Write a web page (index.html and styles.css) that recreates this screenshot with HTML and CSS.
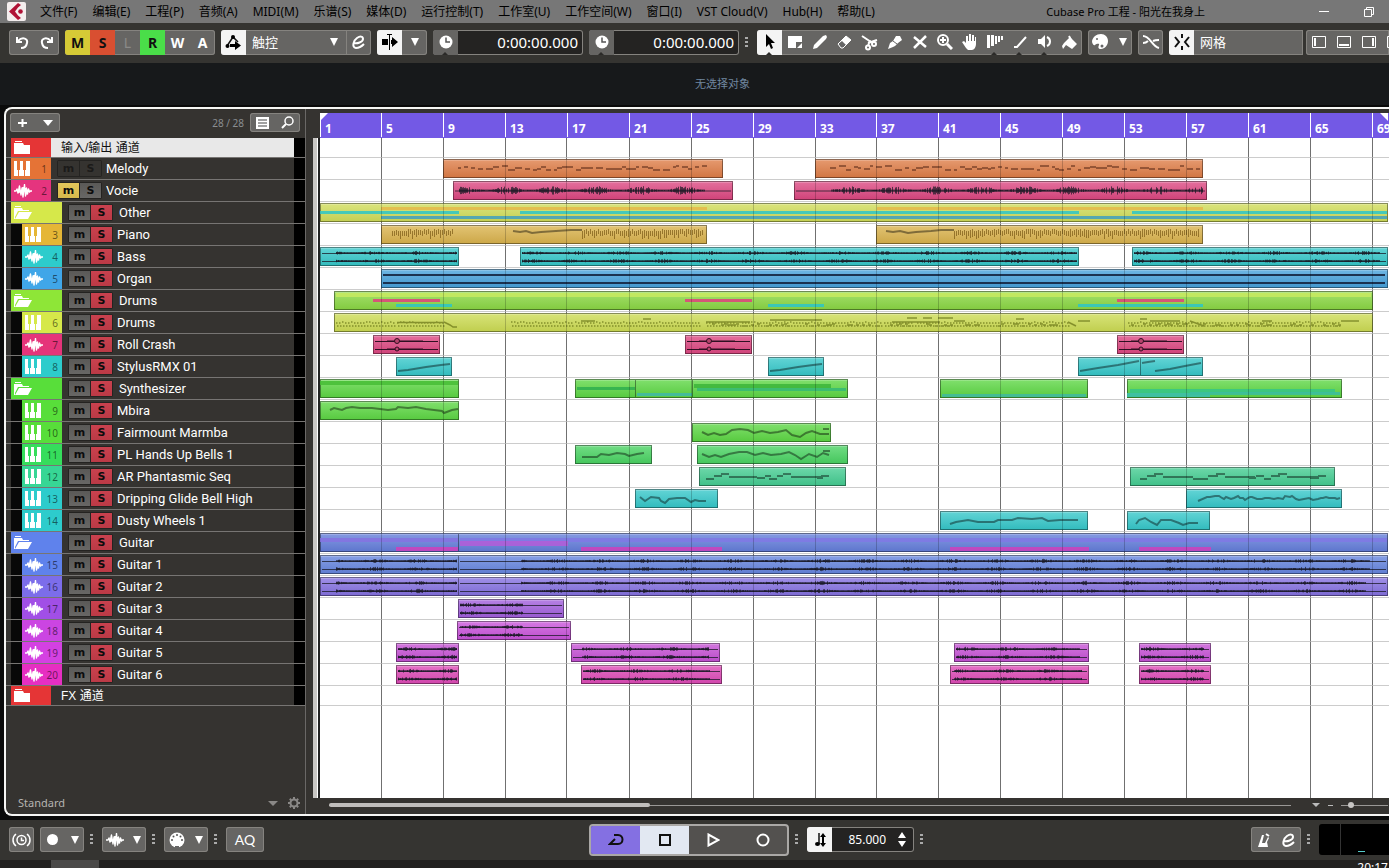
FILE: index.html
```html
<!DOCTYPE html>
<html lang="zh-CN">
<head>
<meta charset="utf-8">
<title>Cubase Pro 工程 - 阳光在我身上</title>
<link rel="stylesheet" href="styles.css">
</head>
<body>
<svg class="sprite" aria-hidden="true">
  <symbol id="keys" viewBox="0 0 16 15"><path fill="#fff" d="M0 0h3v9h1v6H0zM5 15V9h1V0h3v9h1v6zM11 15V9h1V0h4v15z"/></symbol>
  <symbol id="wave" viewBox="0 0 18 14"><path fill="none" stroke="#fff" stroke-width="1.400" stroke-linejoin="round" d="M0 7h2l1-2 1 4 1.500-7L7 11l1-7 1 9L10.500.5 11.500 12l1-8 1 6 1-5 1 3 .8-1H18M3 7h12M5 5v4M9 3v8M12 4v7"/></symbol>
  <symbol id="folder" viewBox="0 0 16 13"><path fill="#fff" d="M1 0h7v1H1zM0 2h9l1 2h6v9H0z"/></symbol>
  <symbol id="folder-open" viewBox="0 0 19 14"><path fill="#fff" d="M1 0h6v1H1zM0 2h8l1 2h6v1H4l-3 6v2H0zM5 6h13l-4 7H1z"/></symbol>
  <symbol id="down" viewBox="0 0 8 8"><path fill="currentColor" d="M0 0h8L4 8z"/></symbol>
  <symbol id="clock" viewBox="0 0 14 14"><circle cx="7" cy="7" r="6.500" fill="#fff"/><path d="M7 2.500V7h4" fill="none" stroke="#555" stroke-width="1.500"/></symbol>
</svg>

<header class="menubar">
  <svg class="logo" viewBox="0 0 19 19"><rect width="19" height="19" rx="2" fill="#f4eeee"/><path d="M11 1 2 9.500 11 18l3-2-3-2.500-3-4L11 5.500 14 3z" fill="#b01235"/><circle cx="13.500" cy="9.500" r="2.300" fill="#b01235"/></svg>
  <nav class="menus">
    <button>文件(F)</button><button>编辑(E)</button><button>工程(P)</button><button>音频(A)</button><button>MIDI(M)</button><button>乐谱(S)</button><button>媒体(D)</button><button>运行控制(T)</button><button>工作室(U)</button><button>工作空间(W)</button><button>窗口(I)</button><button>VST Cloud(V)</button><button>Hub(H)</button><button>帮助(L)</button>
  </nav>
  <h1 class="title">Cubase Pro 工程 - 阳光在我身上</h1>
  <div class="winbtns">
    <button aria-label="最小化"><svg width="10" height="10"><path d="M0 4.500h10" stroke="#fff"/></svg></button>
    <button aria-label="还原"><svg width="10" height="10" fill="none" stroke="#fff"><path d="M.5 2.500h7v7h-7zM2.500 2.500v-2h7v7h-2"/></svg></button>
  </div>
</header>

<section class="toolbar" aria-label="工具栏">
  <div class="group">
    <button aria-label="撤销"><svg width="14" height="13" fill="none" stroke="#fff" stroke-width="2"><path d="M2 1v5h5M3 5c5-5 10-2 9 2-.5 3-3 5-6 5"/></svg></button>
    <button aria-label="重做"><svg width="14" height="13" fill="none" stroke="#fff" stroke-width="2"><path d="M12 1v5H7M11 5C6 0 1 3 2 7c.5 3 3 5 6 5"/></svg></button>
  </div>
  <div class="group letters">
    <button class="yellow">M</button><button class="red">S</button><button class="dim">L</button><button class="green">R</button><button>W</button><button>A</button>
  </div>
  <div class="group">
    <button class="on" aria-label="自动化面板"><svg width="18" height="18"><path d="M2 13 8 4l5 5" fill="none" stroke="#111" stroke-width="1.500"/><circle cx="2.500" cy="13" r="2"/><circle cx="8" cy="4" r="2"/><path d="M5 11h5V8l6 4.500-6 4.500v-3H5z"/></svg></button>
    <label class="pick mode"><select aria-label="自动化模式"><option>触控</option></select><svg width="8" height="8"><use href="#down"/></svg></label>
    <button class="split" aria-label="编辑自动化"><svg width="14" height="14" fill="none" stroke="#fff" stroke-width="2"><path d="M2 8c3 1 9-1 9-4S8 1 5 3-1 12 4 13c3 0 5-1 8-4"/></svg></button>
  </div>
  <div class="group">
    <button class="on" aria-label="自动滚动"><svg width="18" height="16"><path d="M1 5h6v6H1zM8 0h1v16H8zM11 6V3l6 5-6 5v-3h-1V6zM6 0h5v1H6z"/></svg></button>
    <button aria-label="自动滚动设置"><svg width="8" height="8"><use href="#down"/></svg></button>
  </div>
  <div class="group field">
    <button class="tick" aria-label="主时间格式"><svg width="14" height="14"><use href="#clock"/></svg></button>
    <input value="0:00:00.000" aria-label="主时间">
  </div>
  <div class="group field">
    <button class="tick" aria-label="副时间格式"><svg width="14" height="14"><use href="#clock"/></svg></button>
    <input value="0:00:00.000" aria-label="副时间">
  </div>
  <span class="dots"></span>
  <div class="group tools">
    <button class="on tick" aria-label="选择"><svg width="16" height="16"><path d="M4 0v13l3-3 2 5 2-1-2-5h4z"/></svg></button>
    <button aria-label="范围"><svg width="16" height="16"><path fill="#fff" d="M1 2h14v6H9v6H1zM15 9v5h-5z"/></svg></button>
    <button aria-label="画笔"><svg width="16" height="16"><path fill="#fff" d="m1 15 1-4 9-9 3-1 1 2-1 2-9 9z"/></svg></button>
    <button aria-label="擦除"><svg width="16" height="16"><path d="m1 10 8-8 5 4-8 8H4z" fill="#fff"/><path d="m5 7 4 4-3 3H4l-3-4z" fill="#666"/><path d="m1 10 8-8 5 4-8 8H4z" fill="none" stroke="#fff"/></svg></button>
    <button aria-label="剪刀"><svg width="17" height="17" fill="none" stroke="#fff" stroke-width="2"><path d="m1 2 9 6M7 9l9-3M7 12l2-6"/><circle cx="7" cy="13.500" r="2"/><circle cx="13" cy="10" r="2"/></svg></button>
    <button aria-label="胶合"><svg width="16" height="16"><path fill="#fff" d="m1 15 2-6 3-2 3-5h4l2 4-4 3-3 3-2 1z"/><path d="m6 7 4 3" stroke="#666"/></svg></button>
    <button aria-label="静音"><svg width="14" height="14"><path d="m1 2 12 10M13 1 1 13" stroke="#fff" stroke-width="2.500"/></svg></button>
    <button aria-label="缩放"><svg width="16" height="16" fill="none" stroke="#fff" stroke-width="2"><circle cx="6" cy="6" r="5"/><path d="m10 10 5 5" stroke-width="3"/><path d="M3 6h6M6 3v6"/></svg></button>
    <button aria-label="手形"><svg width="15" height="16"><path fill="#fff" d="M4 14 0 8l2-1 2 2V2h2v5h1V0h2v7h1V1h2v6h1V3h1v7c0 3-2 6-4 6H6z"/></svg></button>
    <button class="tick" aria-label="时间伸缩"><svg width="16" height="16"><path fill="#fff" d="M0 1h3v13H0zM4 1h3v11H4zM8 2h2v8H8zM11 2h2v6h-2zM14 2h2v4h-2z"/></svg></button>
    <button class="tick" aria-label="线条"><svg width="14" height="14"><path d="M1 12h3L13 2" stroke="#fff" stroke-width="2" fill="none"/></svg></button>
    <button class="tick" aria-label="播放"><svg width="16" height="16"><path fill="#fff" d="M1 5h3l4-4v13l-4-4H1z"/><path d="M10 3c4 2 4 7 0 9" stroke="#fff" stroke-width="2" fill="none"/></svg></button>
    <button aria-label="颜色"><svg width="17" height="17"><path fill="#fff" d="m3 9 6-6 7 7-5 5-6-4-3 4-1-3z"/><path d="m8 2 2 4" stroke="#fff" stroke-width="2"/></svg></button>
  </div>
  <div class="group">
    <button aria-label="颜色菜单"><svg width="17" height="16"><path fill="#fff" d="M9 0c4 0 7 3 7 7s-3 8-7 8c-3 0-3-2-2-4s-3-1-4 0-3-1-3-4c1-4 4-7 9-7z"/><circle cx="5" cy="5" r="1" fill="#666"/><circle cx="10" cy="12" r="1.500" fill="#666"/></svg></button>
    <button class="narrow" aria-label="颜色选项"><svg width="8" height="8"><use href="#down"/></svg></button>
  </div>
  <div class="group">
    <button aria-label="自动交叉淡化"><svg width="18" height="16" fill="none" stroke="#fff" stroke-width="2"><path d="M1 2c7 0 9 10 16 12M1 9c3 0 4-1 5-2M11 7c2-1 3-1 6-1"/></svg></button>
  </div>
  <div class="group snap">
    <button class="on" aria-label="吸附"><svg width="16" height="16" fill="none" stroke="#111" stroke-width="2"><path d="m1 3 4 5-4 5M15 3l-4 5 4 5M8 0v4M8 12v4"/></svg></button>
    <label class="pick"><select aria-label="吸附类型"><option>网格</option></select></label>
  </div>
  <div class="group zones">
    <button aria-label="左侧区域"><svg width="14" height="12" fill="none" stroke="#fff"><path d="M.5.5h13v11H.5z"/><path d="M3 2v8" stroke-width="2"/></svg></button>
    <button aria-label="下方区域"><svg width="14" height="12" fill="none" stroke="#fff"><path d="M.5.5h13v11H.5z"/><path d="M2 9h10" stroke-width="2"/></svg></button>
    <button aria-label="右侧区域"><svg width="14" height="12" fill="none" stroke="#fff"><path d="M.5.5h13v11H.5z"/><path d="M11 2v8" stroke-width="2"/></svg></button>
    <button aria-label="窗口布局"><svg width="14" height="12" fill="none" stroke="#fff"><path d="M.5.5h13v11H.5z"/></svg></button>
  </div>
</section>

<div class="info">无选择对象</div>

<main class="project">
  <section class="tracklist" aria-label="轨道列表">
    <div class="listhead">
      <div class="group small">
        <button aria-label="添加轨道"><svg width="10" height="10"><path d="M0 5h9M4.500 1v8" stroke="#fff" stroke-width="2"/></svg></button>
        <button aria-label="轨道预设"><svg width="10" height="6"><path d="M0 0h10L5 6z" fill="#fff"/></svg></button>
      </div>
      <span class="count">28 / 28</span>
      <div class="group small">
        <button aria-label="筛选"><svg width="13" height="12"><path d="M0 0h13v12H0z" fill="#fff"/><path d="M2 2.500h9v1H2zM2 5.500h9v1H2zM2 8.500h9v1H2z" fill="#444"/></svg></button>
        <button aria-label="搜索"><svg width="13" height="13" fill="none" stroke="#fff" stroke-width="1.500"><circle cx="8" cy="5" r="4"/><path d="m5 8-4 4" stroke-width="2"/></svg></button>
      </div>
    </div>
    <div id="tracks"></div>
    <div class="listfoot">
      <label class="pick"><select aria-label="缩放预设"><option>Standard</option></select></label>
      <svg width="10" height="5"><path d="M0 0h10L5 5z" fill="#8a8886"/></svg>
      <button aria-label="设置"><svg width="12" height="12"><circle cx="6" cy="6" r="3.500" fill="none" stroke="#8a8886" stroke-width="2"/><path d="M6 0v2M6 10v2M0 6h2M10 6h2M1.800 1.800l1.400 1.400M8.800 8.800l1.400 1.400M10.200 1.800 8.800 3.200M3.200 8.800l-1.400 1.400" stroke="#8a8886" stroke-width="2"/></svg></button>
    </div>
  </section>
  <div class="divider"></div>
  <section class="timeline" aria-label="工程窗口">
    <div class="ruler" id="ruler"></div>
    <div class="arrange" id="arrange"><div id="lanes"></div></div>
    <div class="scroll">
      <div class="hbar"><div class="thumb"></div></div>
      <svg width="8" height="4"><path d="M0 0h8L4 4z" fill="#bbb"/></svg>
      <span class="minus"></span>
      <input type="range" min="0" max="100" value="16" aria-label="水平缩放">
    </div>
  </section>
</main>

<footer class="transport">
  <div class="group"><button aria-label="节拍"><svg width="19" height="14" fill="none" stroke="#fff" stroke-width="1.500"><circle cx="9.500" cy="7" r="4.500"/><path d="M9.500 4.500v3H12M4 1C0 4 0 10 4 13M15 1c4 3 4 9 0 12"/></svg></button></div>
  <div class="group pair"><button aria-label="录音模式"><svg width="11" height="11"><circle cx="5.500" cy="5.500" r="5.500" fill="#fff"/></svg></button><button aria-label="录音选项"><svg width="8" height="8"><use href="#down"/></svg></button></div>
  <span class="dots"></span>
  <div class="group pair"><button aria-label="音频录音"><svg width="18" height="14"><use href="#wave"/></svg></button><button aria-label="音频选项"><svg width="8" height="8"><use href="#down"/></svg></button></div>
  <span class="dots"></span>
  <div class="group pair"><button aria-label="MIDI录音"><svg width="16" height="16"><circle cx="8" cy="8" r="7.500" fill="#fff"/><path d="M6 14h4v2H6z" fill="#666"/><g fill="#555"><circle cx="3" cy="8" r="1"/><circle cx="4.500" cy="4.500" r="1"/><circle cx="8" cy="3" r="1"/><circle cx="11.500" cy="4.500" r="1"/><circle cx="13" cy="8" r="1"/></g></svg></button><button aria-label="MIDI选项"><svg width="8" height="8"><use href="#down"/></svg></button></div>
  <span class="dots"></span>
  <div class="group aq"><button>AQ</button></div>
  <div class="play">
    <button class="cycle" aria-label="循环"><svg width="16" height="12" fill="none" stroke="#111" stroke-width="2"><path d="M6 1h4c6 0 6 9 0 9H2l5-5"/></svg></button>
    <button class="stop" aria-label="停止"><svg width="12" height="12"><path d="M1 1h10v10H1z" fill="none" stroke="#111" stroke-width="2"/></svg></button>
    <button aria-label="播放"><svg width="13" height="14"><path d="M1.500 1.500v11l10-5.500z" fill="none" stroke="#fff" stroke-width="2"/></svg></button>
    <button aria-label="录音"><svg width="14" height="14"><circle cx="7" cy="7" r="5.500" fill="none" stroke="#fff" stroke-width="2"/></svg></button>
  </div>
  <span class="dots"></span>
  <div class="group field tempo">
    <button class="on" aria-label="速度轨道"><svg width="12" height="16"><path d="M5 1v11" stroke="#111" stroke-width="1.500"/><ellipse cx="3.500" cy="12" rx="2.500" ry="2"/><path d="m9 1 3 4h-2v6h2l-3 4-3-4h2V5H6z"/></svg></button>
    <input value="85.000" aria-label="速度">
    <svg width="8" height="16"><path d="M0 6h8L4 0zM0 9h8l-4 6z" fill="#fff"/></svg>
  </div>
  <span class="dots"></span>
  <div class="group right"><button aria-label="节拍器"><svg width="12" height="14"><path d="M4 2h2L4 10h3l3-6 1 1-2 4 1 5H0z" fill="#fff"/><path d="m8 1 3 2" stroke="#fff" stroke-width="2"/></svg></button><button aria-label="节拍器设置"><svg width="14" height="14" fill="none" stroke="#fff" stroke-width="2"><path d="M2 8c3 1 9-1 9-4S8 1 5 3-1 12 4 13c3 0 5-1 8-4"/></svg></button></div>
  <span class="dots"></span>
  <div class="meter"><i></i></div>
</footer>
<div class="taskbar"><span class="task"></span><time>20:17</time></div>
<script src="app.js"></script>
</body>
</html>
```

FILE: styles.css
```css
* { box-sizing: border-box; }
body {
  margin: 0;
  height: 100vh;
  display: flex;
  flex-direction: column;
  overflow: hidden;
  background: #0a0a0a;
  color: #fff;
  font: 12px/16px "Noto Sans", "Noto Sans CJK SC", sans-serif;
}
button, select, input { font: inherit; color: inherit; border: 0; background: none; padding: 0; margin: 0; }
svg { display: block; flex: none; }
.sprite { position: absolute; width: 0; height: 0; }

.menubar { display: flex; align-items: center; height: 23px; flex: none; background: #777; color: #000; padding: 0 15px 0 7px; }
.logo { width: 19px; height: 19px; }
.menus { display: flex; gap: 15px; margin-left: 14px; white-space: nowrap; }
.title { margin: 0 0 0 auto; font-size: 11px; font-weight: 400; white-space: nowrap; }
.winbtns { display: flex; gap: 35px; margin-left: 114px; }

.toolbar { display: flex; align-items: center; gap: 6px; height: 40px; flex: none; padding: 0 0 2px 9px; background: #353431; }
.group { display: flex; flex: none; height: 25px; background: #666563; border-radius: 3px; box-shadow: inset 0 0 0 1px #85837f; overflow: hidden; }
.group button { width: 25px; display: grid; place-items: center; position: relative; }
.letters button { font: 700 14px/25px "Noto Sans", sans-serif; }
.letters .yellow { background: #d6ca36; color: #111; }
.letters .red { background: #d94f31; color: #111; }
.letters .green { background: #4ade49; color: #111; }
.letters .dim { color: #8b8a88; font-weight: 400; }
.group .on { background: #f4f4f4; }
.group .split { border-left: 1px solid #85837f; }
.group .narrow { width: 19px; }
.tick::after { content: ""; position: absolute; bottom: 0; left: 9px; border: 3px solid transparent; border-top: 0; border-bottom-color: #2b2a28; }
.pick { display: flex; align-items: center; flex: 1; padding: 0 8px 0 6px; }
.pick select { appearance: none; flex: 1; font-size: 13px; }
.mode { width: 100px; }
.field { background: #242322; }
.field button { background: #666563; }
.field input { width: 125px; padding-right: 5px; text-align: right; font-size: 15px; }
.dots { flex: none; width: 3px; height: 11px; background: repeating-linear-gradient(#aaa 0 2px, transparent 2px 4px); }
.toolbar .dots { margin-right: 3px; }
.snap { flex: 0 1 134px; border-radius: 3px 0 0 3px; }
.zones { flex: 0 0 83px; margin-left: -3px; border-radius: 3px 0 0 3px; }
.zones button { flex: none; }

.info { flex: none; height: 42px; padding-left: 56px; display: grid; place-items: center; background: #17191b; color: #7188a0; font-size: 11px; }

.project { flex: 1; min-height: 0; display: flex; margin: 2px 0 4px 4px; border: 2px solid #f6f6f4; border-right: 0; border-radius: 8px 0 0 8px; background: #353330; overflow: hidden; }
.tracklist { flex: none; width: 300px; border-right: 1px solid #6a6866; display: flex; flex-direction: column; }
.listhead { display: flex; align-items: center; height: 29px; flex: none; padding: 0 5px 2px 4px; }
.small { height: 19px; }
.count { margin: 0 6px 0 auto; color: #8a8e92; font-size: 10px; }
.track { display: flex; align-items: stretch; height: 22px; border-bottom: 1px solid #777573; padding-left: 5px; }
.track.bus { height: 20px; }
.track.selected .name { background: #e8e8e8; color: #111; }
.strip { flex: none; width: 40px; display: flex; align-items: center; justify-content: space-between; padding: 0 4px 0 3px; font-size: 10px; color: rgba(0, 0, 0, .55); }
.strip.open { width: 51px; }
.child .strip { margin-left: 11px; }
.child { background: linear-gradient(90deg, transparent 5px, #080808 5px, #080808 16px, transparent 16px); }
.child .strip, .child .name { background-clip: border-box; }
.ms { display: flex; flex: none; margin: 3px 5px 3px 7px; box-shadow: 0 0 0 1px #242321; gap: 1px; background: #242321; border-radius: 1px; }
.ms button { width: 21px; background: linear-gradient(#5a5957, #686765); color: #0c0c0c; font: 700 11px/14px "DejaVu Sans", sans-serif; }
.ms .solo { background: linear-gradient(#c9414e, #bb3a46); }
.ms .mute { background: linear-gradient(#e3c75b, #d6b94c); }
.ms.off button { background: #353330; color: #1b1a19; }
.name { flex: 1; font: 13px/21px Roboto, sans-serif; white-space: nowrap; overflow: hidden; }
.folder .name { padding-left: 2px; }
.bus .name { padding-left: 10px; font: 12px/20px "Liberation Sans", "Noto Sans CJK SC", sans-serif; }
.level { flex: none; width: 11px; background: #000; }
.listfoot { display: flex; align-items: center; gap: 10px; margin-top: auto; padding: 0 5px 3px 6px; color: #b5b3b0; }
.listfoot select { font-size: 11px; }

.divider { flex: none; width: 14px; margin-top: 29px; margin-bottom: 16px; background: linear-gradient(90deg, transparent 7px, #c8c6c3 7px 11px, #fff 11px 12px, #222 12px); }
.timeline { flex: 1; min-width: 0; padding-top: 4px; display: flex; flex-direction: column; }
.ruler { position: relative; height: 25px; flex: none; background: #7359e5; overflow: hidden; }
.ruler::before, .ruler::after { content: ""; position: absolute; top: 0; left: 0; border: 4px solid transparent; border-top-color: #fff; border-left-color: #fff; }
.ruler::after { left: auto; right: 1px; border-left-color: transparent; border-right-color: #fff; }
.bar { position: absolute; top: 0; height: 24px; border-left: 1px solid #fff; padding: 8px 0 0 4px; font: 700 12px/16px "Noto Sans", sans-serif; }
.arrange { position: relative; flex: 1; background: #fff; overflow: hidden; }
.grid { position: absolute; left: 0; top: 0; width: 100%; height: 100%; pointer-events: none; }
.under { stroke: rgba(0, 0, 0, .45); }
.over { stroke: rgba(0, 0, 0, .2); }
.lane { position: relative; height: 22px; border-bottom: 1px solid #ccc; }
.lane.bus { height: 20px; }
.clip { position: absolute; top: 1px; height: 19px; box-shadow: inset 0 0 0 1px rgba(0, 0, 0, .4), inset 0 2px rgba(255, 255, 255, .2); background-image: linear-gradient(rgba(255, 255, 255, .26), rgba(90, 90, 90, .1)); overflow: hidden; }
.clip svg { width: 100%; height: 100%; }
.scroll { display: flex; align-items: center; gap: 8px; height: 16px; flex: none; padding: 0 1px 2px 9px; }
.hbar { flex: 1; margin-right: 13px; background: linear-gradient(#9a9896, #9a9896) center / 100% 1px no-repeat; }
.thumb { width: 33.333%; height: 4px; border-radius: 2px; background: #c0bebc; }
.minus { width: 5px; height: 1px; background: #bbb; }
.scroll input { appearance: none; width: 47px; height: 8px; background: linear-gradient(#9a9896, #9a9896) center / 100% 1px no-repeat; }
.scroll input::-webkit-slider-thumb { appearance: none; width: 6px; height: 6px; border-radius: 50%; background: #c8c6c4; }

.transport { display: flex; align-items: center; gap: 6px; height: 40px; flex: none; padding: 0 0 1px 9px; background: #353431; }
.transport .dots { margin-right: 3px; }
.pair button:last-child { width: 19px; }
.transport .group.aq button { width: 38px; font: 14px/25px Lato, sans-serif; }
.play { display: flex; height: 32px; margin-left: auto; border: 2px solid #aaa8a6; border-radius: 4px; background: #53514f; overflow: hidden; }
.play button { width: 49px; display: grid; place-items: center; }
.play .cycle { background: #8470e2; }
.play .stop { background: #e2e8f2; }
.tempo { width: 107px; align-items: center; }
.tempo button { height: 25px; }
.tempo input { flex: 1; width: 10px; padding-right: 12px; font-size: 12px; }
.tempo svg { margin-right: 8px; }
.tempo button svg { margin: 0; }
.group.right { margin-left: auto; }
.meter { width: 70px; height: 31px; border-radius: 3px 0 0 3px; background: linear-gradient(90deg, transparent 21px, #333 21px 22px, transparent 22px), #000; padding: 27px 0 0 39px; }
.meter i { display: block; width: 7px; height: 1px; background: #5cc; }
.taskbar { display: flex; justify-content: space-between; height: 8px; flex: none; padding-left: 51px; background: #232221; overflow: hidden; }
.task { width: 48px; background: #4a4948; }
time { font-size: 12px; line-height: 16px; padding-right: 1px; }
```

FILE: app.js
```javascript
const ORIGIN = 320, SPAN = 1069, BAR = 15.47125;
const TEAL = '#2dc6c8', GREEN = '#56d63c', PINK = '#e0407e';
const pct = v => (v / SPAN * 100) + '%';

let seed = 7;
const rnd = () => (seed = (seed * 16807) % 2147483647) / 2147483647;

function wave(w, rows, busy, amp, left) {
  let quiet = '', ticks = '', body = '';
  for (const y of rows) {
    quiet += `M2 ${y + .5}H${w - 2}`;
    for (const [a, b] of busy) {
      body += `M${a - left} ${y}H${b - left}`;
      for (let x = a - left; x < b - left; x += 1) {
        const h = (rnd() * .6 + .4) * amp * (.55 + .45 * Math.sin(x / 7));
        if (rnd() > .35) ticks += `M${x + .5} ${y - h}V${y + h}`;
      }
    }
  }
  return `<g stroke="#181824" fill="none"><path d="${quiet}" stroke-opacity=".75"/><path d="${body}" stroke-width="2" stroke-opacity=".6"/><path d="${ticks}" stroke-opacity=".7"/></g>`;
}
const line = pts => `<path d="M${pts}" stroke="#000" stroke-opacity=".42" stroke-width="2" fill="none"/>`;

function phrase(a, b, mid, amp) {
  let d = '', x = a, y = mid;
  while (x < b) {
    const w = 3 + Math.floor(rnd() * 5);
    d += `M${x} ${y}h${w}`;
    x += w + (rnd() > .6 ? 3 : 0);
    y = mid + Math.round((rnd() - .5) * 2 * amp);
  }
  return `<path d="${d}" stroke="#5a2a18" stroke-opacity=".55" stroke-width="2" fill="none"/>`;
}
function steps(a, b, mid, amp) {
  let d = `${a} ${mid + 3}`, x = a + 4;
  while (x < b) {
    x += 2 + Math.floor(rnd() * 4);
    d += `L${Math.min(x, b)} ${mid + Math.round((rnd() - .5) * 2 * amp)}`;
  }
  return line(d);
}
function ticks(a, b) {
  let d = '';
  for (let x = a; x < b; x += 2) {
    const y = 4 + Math.floor(rnd() * 3), deep = rnd() > .75 ? 8 : 5;
    d += `M${x + .5} ${y}v${deep}`;
  }
  return `<path d="${d}" stroke="#6b4a08" stroke-opacity=".6" fill="none"/>`;
}
function beats(left) {
  let d = '';
  for (const [a, b] of [[336, 396], [397, 443], [511, 572], [575, 700], [706, 882], [884, 1068], [1128, 1340]])
    for (let x = a; x < b; x += 3) {
      d += `M${x - left} ${rnd() > .2 ? 10 : 9}h1.500M${x - left + 1} 13h1.500`;
      if (x > 700 && rnd() > .5) d += `M${x - left} ${11 + Math.round(rnd() * 2)}h3`;
    }
  for (const [a, b, y] of [[397, 443, 9.5], [581, 595, 8], [643, 651, 6], [706, 750, 9], [770, 822, 7], [892, 940, 9], [907, 917, 5], [923, 932, 5], [938, 953, 5], [954, 965, 8], [1016, 1024, 6], [1078, 1090, 8], [1140, 1147, 6], [1150, 1180, 8], [1262, 1272, 8], [1341, 1359, 8]])
    d += `M${a - left} ${y}h${b - a}`;
  d += `M${444 - left} 9l6 3 3 2h4M${1068 - left} 9l8 4M${1190 - left} 8l14 5`;
  return `<path d="${d}" stroke="#5f6a10" stroke-opacity=".65" stroke-width="1.500" fill="none"/>`;
}
const bars = (left, list) => list.map(([a, b, y, h, c]) =>
  `<rect x="${a - left}" y="${y}" width="${b - a}" height="${h}" fill="${c}" fill-opacity=".85"/>`).join('');

const stereo = (a, b, ...busy) => [a, b, w => wave(w, [6, 14], busy, 2.2, a)];
const mono = (a, b, ...busy) => [a, b, w => wave(w, [9.5], busy, 4.5, a)];
const notes = (a, b, pts) => [a, b, () => line(pts)];
const part = (a, b, list) => [a, b, () => bars(a, list)];
const crash = a => [a, a + 67, () => `<path d="M2 6.500h63M2 14.500h63M14 6h36M14 14h36" stroke="#301022" fill="none"/><circle cx="24" cy="6" r="2.500" fill="#b8436d" stroke="#301022"/><circle cx="24" cy="14" r="2" fill="#b8436d" stroke="#301022"/>`];

const M = '#d040bc', O = '#e5b84a', B = '#3f9fc0';
const tracks = [
  { t: 'bus', c: '#e53536', n: '输入/输出 通道', selected: true },
  { t: 'midi', top: true, c: '#e57336', clip: '#de783f', n: 'Melody', no: 1, ms: 'off', clips: [[443, 723, () => phrase(15, 264, 9, 2)], [815, 1203, () => phrase(15, 382, 9, 2)]] },
  { t: 'audio', top: true, c: '#e5347e', clip: '#dc3f7c', n: 'Vocie', no: 2, ms: 'mute', clips: [mono(453, 733, [459, 705]), mono(794, 1207, [831, 1203])] },
  { t: 'folder', c: '#d6e84a', clip: '#cfdc52', n: 'Other', clips: [part(320, 1388, [[381, 707, 4, 3, O], [877, 1203, 4, 3, O], [320, 459, 8, 3, TEAL], [520, 1079, 8, 3, TEAL], [1132, 1387, 8, 3, TEAL], [381, 1387, 13, 3, B]])] },
  { t: 'midi', c: '#e5b636', clip: '#d9b045', n: 'Piano', no: 3, clips: [[381, 707, () => ticks(11, 73) + line('132 6 139 7 145 6 151 8 160 7 175 6 190 5 201 5') + ticks(201, 322)], [876, 1203, () => line('10 6 17 7 24 6 32 8 40 7 55 6 65 5 78 5') + ticks(78, 323)]] },
  { t: 'audio', c: '#2dcccc', clip: TEAL, n: 'Bass', no: 4, clips: [stereo(320, 459, [336, 457]), stereo(520, 1079, [522, 1077]), stereo(1132, 1388, [1134, 1380])] },
  { t: 'audio', c: '#40a6e8', clip: '#3f9edb', n: 'Organ', no: 5, clips: [[381, 1388, w => `<path d="M2 6h${w - 5}M2 14h${w - 5}" stroke="#111d38" stroke-opacity=".85" stroke-width="2"/>`]] },
  { t: 'folder', c: '#8ee637', clip: '#86d73c', n: 'Drums', clips: [part(334, 1373, [[336, 1371, 2, 4, '#c8ea60'], [373, 440, 8, 3, PINK], [685, 752, 8, 3, PINK], [1117, 1184, 8, 3, PINK], [396, 452, 13, 3, TEAL], [768, 824, 13, 3, TEAL], [1078, 1203, 13, 3, TEAL]])] },
  { t: 'midi', c: '#d6e84a', clip: '#cbdb4c', n: 'Drums', no: 6, clips: [[334, 1373, () => beats(334)]] },
  { t: 'audio', c: '#e5347a', clip: '#dc3f7c', n: 'Roll Crash', no: 7, clips: [crash(373), crash(685), crash(1117)] },
  { t: 'midi', c: '#2dcccc', clip: TEAL, n: 'StylusRMX 01', no: 8, clips: [notes(396, 452, '2 14 12 13 30 10 45 8 54 7'), notes(768, 824, '2 14 12 13 30 10 45 8 54 7'), notes(1078, 1141, '2 14 20 11 40 8 61 4'), notes(1140, 1203, '2 6 8 5 15 4M15 14 30 12 45 9 61 6')] },
  { t: 'folder', c: '#58de3a', clip: GREEN, n: 'Synthesizer', clips: [part(320, 459, [[320, 458, 2, 4, '#46bd35']]), part(575, 636, [[577, 636, 8, 3, '#2fae4f']]), part(635, 693, [[637, 693, 14, 3, '#3fb8a8']]), part(692, 848, [[694, 831, 5, 4, '#3cb53a'], [697, 846, 9, 3, '#35b975']]), part(940, 1088, [[942, 1086, 15, 3, '#3fb8a0']]), part(1127, 1342, [[1130, 1335, 10, 4, '#35c487'], [1127, 1210, 14, 4, '#3abdb0'], [1190, 1340, 13, 3, '#3abda0']])] },
  { t: 'midi', c: '#58de3a', clip: GREEN, n: 'Mbira', no: 9, clips: [notes(320, 459, '10 9 14 7 18 8 22 9 26 7 32 6 40 7 52 7 60 8 68 9 76 8 78 6 88 7 96 6 106 8 114 9 122 10 124 12 132 9 138 8')] },
  { t: 'midi', c: '#58de3a', clip: GREEN, n: 'Fairmount Marmba', no: 10, clips: [notes(692, 831, '10 9 16 12 22 10 28 12 34 11 40 7 48 6 56 7 62 10 70 8 78 10 86 9 94 7 100 12 108 14 114 10 120 8 128 11H137M131 6h6')] },
  { t: 'midi', c: '#36dd5c', clip: '#42d25c', n: 'PL Hands Up Bells 1', no: 11, clips: [notes(575, 652, '7 12H22L26 9 34 10 42 8 50 9 54 11 62 9 69 8'), notes(697, 848, '5 9 12 12 18 10 24 12 32 9 42 7 50 7 58 10 66 8 74 10 84 9 92 7 98 10 104 14 112 9 120 12 126 8 132 10M126 6h7')] },
  { t: 'midi', c: '#37d695', clip: '#3ccb8d', n: 'AR Phantasmic Seq', no: 12, clips: [notes(699, 846, '7 12h8M15 9h8M22 7h8M30 10h28M58 11h8M66 9h6M70 12h8M78 9h6M84 7h8M92 10h30M118 11h6M122 9h8'), notes(1130, 1335, '10 12h7M17 9h9M24 7h9M33 10h30M63 12h15M78 9h10M86 7h9M95 10h30M119 11h7M126 9h8M134 12h7M141 9h9M148 7h9M157 10h32M180 11h9M188 9h8')] },
  { t: 'midi', c: '#2dcccc', clip: TEAL, n: 'Dripping Glide Bell High', no: 13, clips: [notes(635, 718, '5 8 10 12 16 8 24 9 26 12 30 14 34 10 42 9 50 9 56 13 60 11 64 12H71'), [1186, 1342, () => steps(12, 154, 9, 2)]] },
  { t: 'midi', c: '#2dcccc', clip: TEAL, n: 'Dusty Wheels 1', no: 14, clips: [notes(940, 1088, '10 13 16 11 28 9 38 11 54 11 58 9 72 9 78 7 92 8 102 7 108 10 120 9 138 9'), notes(1127, 1210, '9 13 12 9 18 7 24 11 30 14 34 9 44 9 52 12 56 14 62 12H71')] },
  { t: 'folder', c: '#5f82ec', clip: '#5d78da', n: 'Guitar', clips: [part(320, 459, [[320, 458, 5, 4, '#8572e0'], [396, 458, 14, 4, M]]), part(458, 1388, [[460, 1387, 5, 4, '#8078e4'], [460, 568, 8, 5, '#b45cd8'], [581, 722, 14, 4, M], [950, 1089, 14, 4, M], [1139, 1211, 14, 4, M]])] },
  { t: 'audio', c: '#5f82ec', clip: '#5f80de', n: 'Guitar 1', no: 15, clips: [stereo(320, 459, [336, 457]), stereo(458, 1388, [521, 1370])] },
  { t: 'audio', c: '#7c6dea', clip: '#806be0', n: 'Guitar 2', no: 16, clips: [stereo(320, 459, [336, 457]), stereo(458, 1388, [521, 1366])] },
  { t: 'audio', c: '#a14fe6', clip: '#9e58dc', n: 'Guitar 3', no: 17, clips: [stereo(458, 564, [460, 523])] },
  { t: 'audio', c: '#cb45e2', clip: '#c84cda', n: 'Guitar 4', no: 18, clips: [stereo(457, 571, [460, 523])] },
  { t: 'audio', c: '#d441e2', clip: '#c44ad4', n: 'Guitar 5', no: 19, clips: [stereo(396, 459, [398, 457]), stereo(571, 720, [582, 709]), stereo(954, 1089, [956, 1080]), stereo(1139, 1211, [1141, 1204])] },
  { t: 'audio', c: '#e62fc2', clip: '#dd42b4', n: 'Guitar 6', no: 20, clips: [stereo(396, 459, [398, 457]), stereo(581, 722, [583, 710]), stereo(950, 1089, [954, 1082]), stereo(1139, 1211, [1141, 1204])] },
  { t: 'bus', c: '#e53536', n: 'FX 通道' }
];

const icon = (id, w, h) => `<svg width="${w}" height="${h}"><use href="#${id}"/></svg>`;
const icons = { bus: icon('folder', 16, 13), folder: icon('folder-open', 19, 14), midi: icon('keys', 16, 15), audio: icon('wave', 18, 14) };

function row(k) {
  const cls = ['track', k.t, k.selected && 'selected', (k.t === 'midi' || k.t === 'audio') && !k.top && 'child'].filter(Boolean).join(' ');
  const ms = k.t === 'bus' ? '' : `<span class="ms ${k.ms === 'off' ? 'off' : ''}"><button class="${k.ms === 'mute' ? 'mute' : ''}" aria-label="静音 ${k.n}">m</button><button class="${k.ms ? '' : 'solo'}" aria-label="独奏 ${k.n}">S</button></span>`;
  return `<div class="${cls}"><span class="strip ${k.t === 'folder' ? 'open' : ''}" style="background:${k.c}">${icons[k.t]}${k.no ? `<span>${k.no}</span>` : ''}</span>${ms}<span class="name">${k.n}</span><span class="level"></span></div>`;
}
function lane(k) {
  const clips = (k.clips || []).map(([a, b, draw]) =>
    `<div class="clip" style="left:${pct(a - ORIGIN)};width:${pct(b - a)};background-color:${k.clip}"><svg viewBox="0 0 ${b - a} 19" preserveAspectRatio="none">${draw(b - a)}</svg></div>`).join('');
  return `<div class="lane ${k.t === 'bus' ? 'bus' : ''}">${clips}</div>`;
}

document.getElementById('tracks').innerHTML = tracks.map(row).join('');
document.getElementById('lanes').innerHTML = tracks.map(lane).join('');

let marks = '', rules = '';
for (let bar = 1; bar <= 69; bar += 4) {
  const x = pct(Math.max(0, Math.round((bar - 1) * BAR - .5)));
  marks += `<span class="bar" style="left:${x}">${bar}</span>`;
  if (bar > 1) rules += `<line x1="${x}" x2="${x}" y1="0" y2="100%"/>`;
}
document.getElementById('ruler').innerHTML = marks;
const grid = kind => `<svg class="grid ${kind}" shape-rendering="crispEdges">${rules}</svg>`;
const arrange = document.getElementById('arrange');
arrange.insertAdjacentHTML('afterbegin', grid('under'));
arrange.insertAdjacentHTML('beforeend', grid('over'));
```
